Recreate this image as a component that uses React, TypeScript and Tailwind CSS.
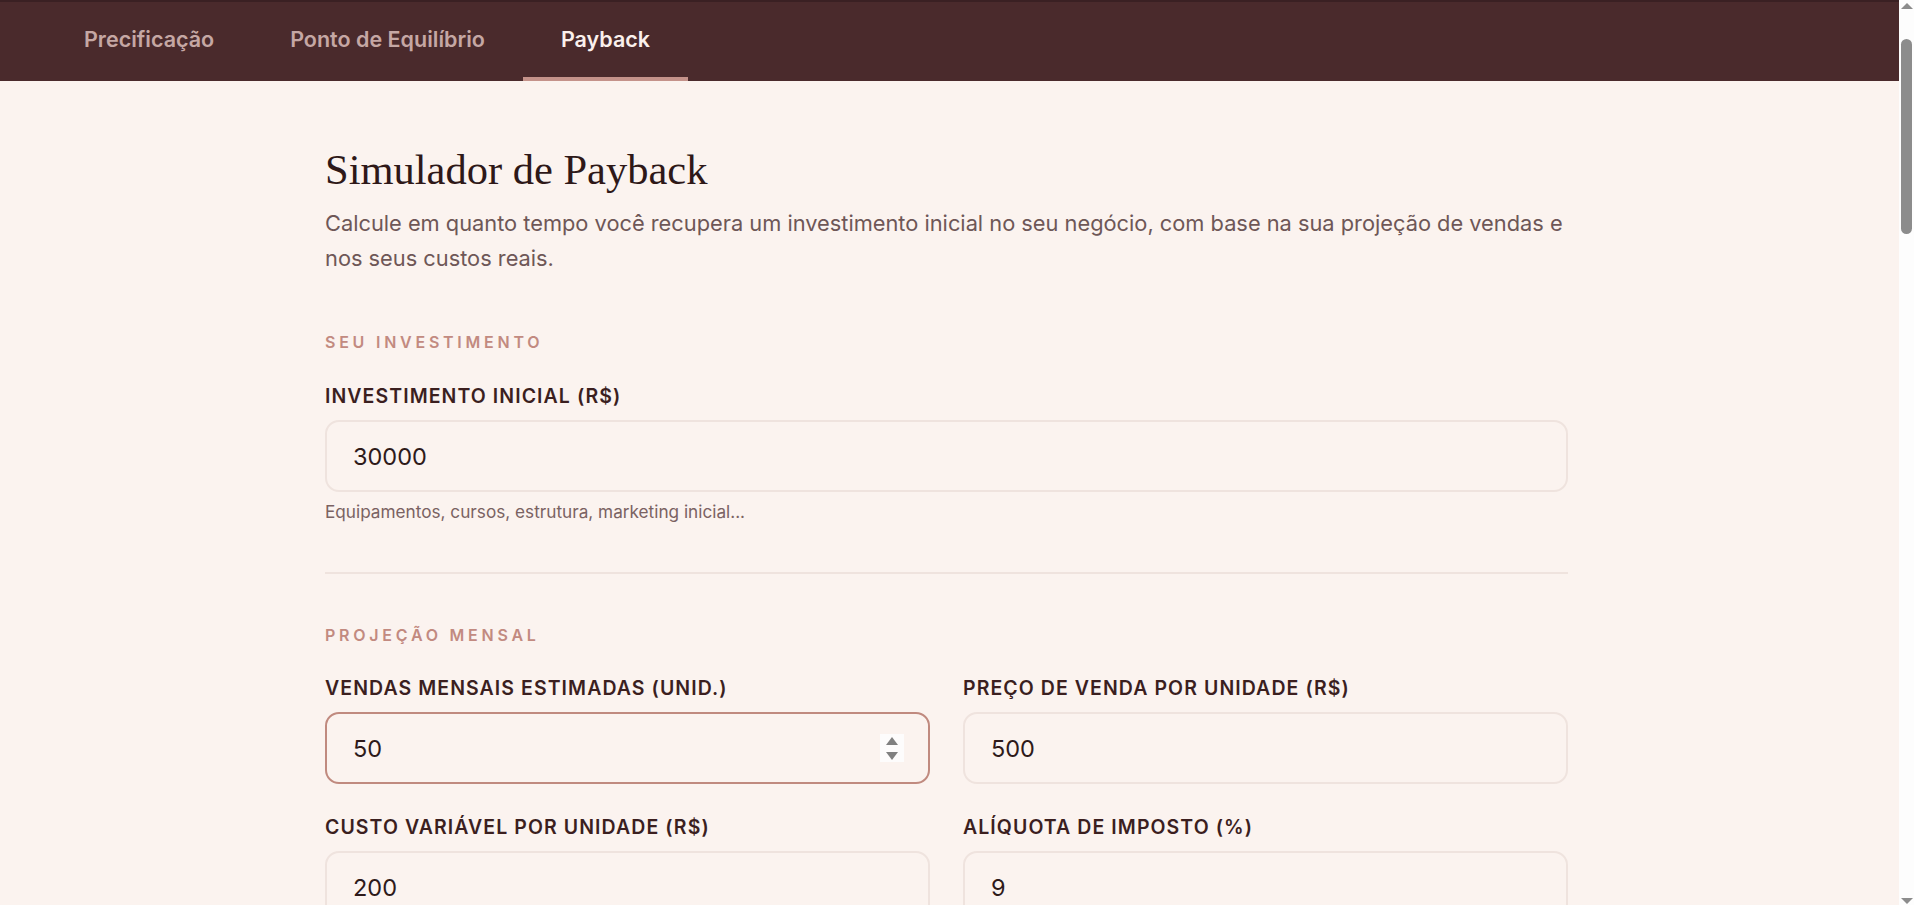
import React from "react";

const tabs = [
  { label: "Precificação", active: false },
  { label: "Ponto de Equilíbrio", active: false },
  { label: "Payback", active: true },
];

function SectionLabel({ children }: { children: React.ReactNode }) {
  return (
    <div className="text-[16px] leading-[24px] font-semibold tracking-[0.235em] uppercase text-[#c28a80]">
      {children}
    </div>
  );
}

function FieldLabel({ children }: { children: React.ReactNode }) {
  return (
    <label className="block text-[19.5px] leading-[24px] font-semibold tracking-[0.055em] uppercase text-[#3b1f1f] mb-[12px]">
      {children}
    </label>
  );
}

function Spinner() {
  return (
    <div className="absolute right-[26px] top-1/2 -translate-y-1/2 w-[24px] h-[28px] bg-[#fdfcfc] flex flex-col items-center justify-center gap-[7px]">
      <div className="w-0 h-0 border-l-[6px] border-r-[6px] border-b-[8px] border-l-transparent border-r-transparent border-b-[#808080]" />
      <div className="w-0 h-0 border-l-[6px] border-r-[6px] border-t-[8px] border-l-transparent border-r-transparent border-t-[#808080]" />
    </div>
  );
}

function Field({
  label,
  value,
  focused = false,
  hint,
}: {
  label: string;
  value: string;
  focused?: boolean;
  hint?: string;
}) {
  return (
    <div>
      <FieldLabel>{label}</FieldLabel>
      <div className="relative">
        <input
          readOnly
          type="text"
          value={value}
          className={
            focused
              ? "w-full h-[72px] rounded-[14px] border-2 border-[#c08a7f] bg-[#fbf3ef] px-[26px] text-[23.5px] text-[#2e1a1a] outline-none font-['Inter']"
              : "w-full h-[72px] rounded-[14px] border-2 border-[#efe3de] bg-[#fbf3ef] px-[26px] text-[23.5px] text-[#2e1a1a] outline-none font-['Inter']"
          }
        />
        {focused && <Spinner />}
      </div>
      {hint && (
        <p className="mt-[8px] text-[17.2px] leading-[24px] text-[#7a6262]">{hint}</p>
      )}
    </div>
  );
}

function ScrollBar() {
  return (
    <aside className="sticky top-0 h-screen w-[15px] shrink-0 bg-[#fdfdfd] flex flex-col">
      <div className="h-[17px] flex justify-center pt-[3px]">
        <svg width="12" height="6" viewBox="0 0 12 6">
          <path d="M6 0 L12 6 L0 6 Z" fill="#8c8c8c" />
        </svg>
      </div>
      <div className="flex-1 pt-[22px] flex justify-center">
        <div className="w-[11px] h-[195px] rounded-full bg-[#8c8c8c]" />
      </div>
      <div className="h-[17px] flex justify-center items-end pb-[1px]">
        <svg width="12" height="6" viewBox="0 0 12 6">
          <path d="M0 0 L12 0 L6 6 Z" fill="#8c8c8c" />
        </svg>
      </div>
    </aside>
  );
}

export default function App() {
  return (
    <div className="flex bg-[#fbf3ef] font-['Inter',sans-serif]">
      <div className="flex-1 min-w-0 min-h-[4040px]">
        <nav className="h-[81px] bg-[#4a2a2c] border-t-2 border-[#3a2023] px-[46px] flex items-stretch">
          {tabs.map((t) => (
            <div
              key={t.label}
              className={
                t.active
                  ? "px-[38px] flex items-center border-b-4 border-[#c4928a] text-[21.5px] font-semibold text-[#fbf0ec]"
                  : "px-[38px] flex items-center border-b-4 border-transparent text-[21.5px] font-semibold text-[#c5a7a4]"
              }
            >
              {t.label}
            </div>
          ))}
        </nav>

        <main className="mx-auto w-[1249px] pr-[6px] pt-[63px] pb-20">
          <h1 className="font-['Liberation_Serif',serif] text-[42.5px] leading-[1.2] font-normal text-[#2e1818] mb-[11px]">
            Simulador de Payback
          </h1>
          <p className="text-[21.8px] leading-[35px] text-[#6e5757]">
            Calcule em quanto tempo você recupera um investimento inicial no seu negócio, com base na sua projeção de vendas e nos seus custos reais.
          </p>

          <section className="mt-[54px]">
            <SectionLabel>Seu Investimento</SectionLabel>
            <div className="mt-[30px]">
              <Field
                label="Investimento Inicial (R$)"
                value="30000"
                hint="Equipamentos, cursos, estrutura, marketing inicial..."
              />
            </div>
          </section>

          <hr className="mt-[48px] border-0 border-t-2 border-[#efe3de]" />

          <section className="mt-[49px]">
            <SectionLabel>Projeção Mensal</SectionLabel>
            <div className="mt-[29px] grid grid-cols-2 gap-x-[33px] gap-y-[31px]">
              <Field label="Vendas Mensais Estimadas (Unid.)" value="50" focused />
              <Field label="Preço de Venda por Unidade (R$)" value="500" />
              <Field label="Custo Variável por Unidade (R$)" value="200" />
              <Field label="Alíquota de Imposto (%)" value="9" />
            </div>
          </section>

          <hr className="mt-[48px] border-0 border-t-2 border-[#efe3de]" />

          <section className="mt-[49px]">
            <SectionLabel>Custos Fixos</SectionLabel>
            <div className="mt-[30px] grid grid-cols-2 gap-x-[33px] gap-y-[30px]">
              <Field label="Aluguel (R$)" value="1500" />
              <Field label="Salários e Pró-labore (R$)" value="3000" />
              <Field label="Outros Custos Fixos (R$)" value="800" />
            </div>
          </section>
        </main>
      </div>
      <ScrollBar />
    </div>
  );
}
